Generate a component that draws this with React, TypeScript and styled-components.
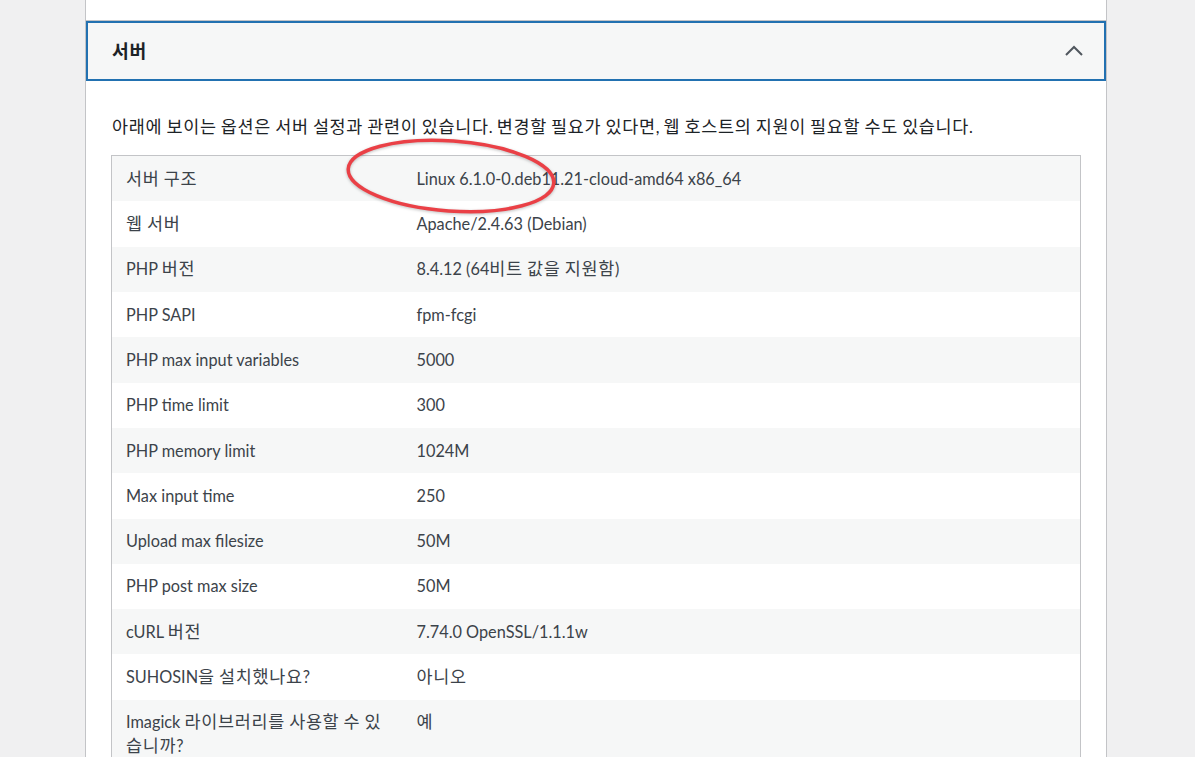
import styled, { createGlobalStyle } from "styled-components";
import { Fragment } from "react";

const GlobalStyle = createGlobalStyle`
    html, body {
        margin: 0;
        padding: 0;
        background: #f0f0f1;
    }
    body {
        font-family: "Lato", "Noto Sans CJK KR", sans-serif;
        font-size: 16.3px;
        color: #3c434a;
    }
`

const Page = styled.div`
    position: relative;
    height: 757px;
    overflow: hidden;
`
const Panel = styled.div`
    margin-left: 85px;
    width: 1020px;
    min-height: 757px;
    background: #fff;
    border-left: 1px solid #c3c4c7;
    border-right: 1px solid #c3c4c7;
`
const PrevSection = styled.div`
    height: 20px;
    border-bottom: 1px solid #c3c4c7;
`
const SectionHeader = styled.div`
    display: flex;
    align-items: center;
    justify-content: space-between;
    height: 56px;
    padding: 0 20px 0 24px;
    background: #f6f7f7;
    border: 2px solid #2271b1;
`
const SectionTitle = styled.h3`
    margin: 0;
    font-size: 17px;
    font-weight: 700;
    color: #1d2327;
`
const Body = styled.div`
    padding: 36px 25px 0 25px;
`
const Description = styled.p`
    margin: 0 0 18px 1px;
    line-height: 20px;
    color: #1d2327;
`
// the Korean glyphs in the shot are wider than Noto CJK ones
const Hangul = styled.span`
    font-family: "Noto Sans CJK KR", sans-serif;
    font-size: 1.07em;
    letter-spacing: 0.04em;
    line-height: 1;
`
const InfoTable = styled.table`
    width: 100%;
    border-collapse: collapse;
    border: 1px solid #c3c4c7;
    table-layout: fixed;
`
const Row = styled.tr<{ $striped: boolean }>`
    background: ${p => p.$striped ? "#f6f7f7" : "#fff"};
`
const LabelCell = styled.td`
    box-sizing: border-box;
    width: 291px;
    padding: 10.67px 16px 10.67px 14px;
    line-height: 24px;
    vertical-align: top;
    color: #3c434a;
`
const ValueCell = styled.td`
    padding: 10.67px 15px 10.67px 14px;
    line-height: 24px;
    vertical-align: top;
    color: #3c434a;
`
const Chevron = styled.svg`
    width: 20px;
    height: 20px;
    display: block;
`
const Annotation = styled.svg`
    position: absolute;
    left: 340px;
    top: 132px;
    width: 224px;
    height: 90px;
    overflow: visible;
    filter: drop-shadow(0 1px 1.5px rgba(0, 0, 0, 0.25));
    pointer-events: none;
`

function Ko({ text }: { text: string }) {
    const parts = text.split(/([\uAC00-\uD7A3\u3131-\u318E]+)/)
    return (
        <>
            {parts.map((p, i) =>
                i % 2 === 1 ? <Hangul key={i}>{p}</Hangul> : <Fragment key={i}>{p}</Fragment>
            )}
        </>
    )
}

const rows: [string, string][] = [
    ["서버 구조", "Linux 6.1.0-0.deb11.21-cloud-amd64 x86_64"],
    ["웹 서버", "Apache/2.4.63 (Debian)"],
    ["PHP 버전", "8.4.12 (64비트 값을 지원함)"],
    ["PHP SAPI", "fpm-fcgi"],
    ["PHP max input variables", "5000"],
    ["PHP time limit", "300"],
    ["PHP memory limit", "1024M"],
    ["Max input time", "250"],
    ["Upload max filesize", "50M"],
    ["PHP post max size", "50M"],
    ["cURL 버전", "7.74.0 OpenSSL/1.1.1w"],
    ["SUHOSIN을 설치했나요?", "아니오"],
    ["Imagick 라이브러리를 사용할 수 있습니까?", "예"],
]

export default function App() {
    return (
        <Page>
            <GlobalStyle />
            <Panel>
                <PrevSection />
                <SectionHeader>
                    <SectionTitle><Ko text="서버" /></SectionTitle>
                    <Chevron viewBox="0 0 20 20">
                        <polyline points="2,14 10,6 18,14" fill="none" stroke="#50575e" strokeWidth="2" />
                    </Chevron>
                </SectionHeader>
                <Body>
                    <Description>
                        <Ko text="아래에 보이는 옵션은 서버 설정과 관련이 있습니다. 변경할 필요가 있다면, 웹 호스트의 지원이 필요할 수도 있습니다." />
                    </Description>
                    <InfoTable>
                        <tbody>
                            {rows.map(([label, value], i) => (
                                <Row key={i} $striped={i % 2 === 0}>
                                    <LabelCell><Ko text={label} /></LabelCell>
                                    <ValueCell><Ko text={value} /></ValueCell>
                                </Row>
                            ))}
                        </tbody>
                    </InfoTable>
                </Body>
            </Panel>
            {/* red marker drawn over the first row */}
            <Annotation viewBox="0 0 224 90">
                <ellipse cx="111" cy="44" rx="103" ry="35" fill="none" stroke="#ea4046" strokeWidth="3.5" transform="rotate(4 111 44)" />
            </Annotation>
        </Page>
    )
}
